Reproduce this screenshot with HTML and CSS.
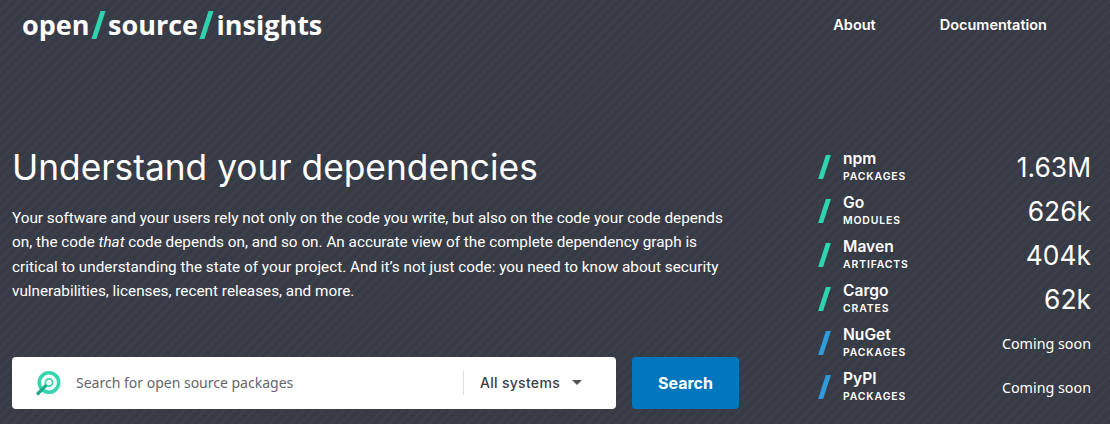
FILE: index.html
```html
<!DOCTYPE html>
<html>
  <head>
    <meta name="viewport" content="width=device-width, initial-scale=1.0" />
    <title>Open Source Insights</title>
    <link rel="stylesheet" href="styles.css">
  </head>
  <body>
    <div class="header">
      <div class="logo">open<span class="logo-slash"></span>source<span class="logo-slash"></span>insights</div>
      <div class="nav">
        <a class="nav-about">About</a>
        <a>Documentation</a>
      </div>
    </div>
    <div class="main">
      <div class="intro">
        <h1>Understand your dependencies</h1>
        <p>Your software and your users rely not only on the code you write, but also on the code your code depends on, the code <em>that</em> code depends on, and so on. An accurate view of the complete dependency graph is critical to understanding the state of your project. And it’s not just code: you need to know about security vulnerabilities, licenses, recent releases, and more.</p>
        <form class="search">
          <div class="search-box">
            <svg class="search-icon" width="28" height="28" viewBox="0 0 28 28">
              <circle cx="15" cy="13.5" r="9.7" fill="none" stroke="#35d6b0" stroke-width="3.6" />
              <circle cx="15" cy="13.5" r="3.6" fill="none" stroke="#35d6b0" stroke-width="1.8" />
              <path d="M12.3 16.2 L3 25.5" stroke="#1fa98a" stroke-width="3.2" />
            </svg>
            <span class="search-text">Search for open source packages</span>
            <div class="search-system">All systems<span class="caret"></span></div>
          </div>
          <button>Search</button>
        </form>
      </div>
      <ul class="stats">
        <li>
          <span class="slash"></span>
          <div class="system"><b>npm</b><small>PACKAGES</small></div>
          <span class="count">1.63M</span>
        </li>
        <li>
          <span class="slash"></span>
          <div class="system"><b>Go</b><small>MODULES</small></div>
          <span class="count">626k</span>
        </li>
        <li>
          <span class="slash"></span>
          <div class="system"><b>Maven</b><small>ARTIFACTS</small></div>
          <span class="count">404k</span>
        </li>
        <li>
          <span class="slash"></span>
          <div class="system"><b>Cargo</b><small>CRATES</small></div>
          <span class="count">62k</span>
        </li>
        <li class="soon">
          <span class="slash"></span>
          <div class="system"><b>NuGet</b><small>PACKAGES</small></div>
          <span class="count">Coming soon</span>
        </li>
        <li class="soon">
          <span class="slash"></span>
          <div class="system"><b>PyPI</b><small>PACKAGES</small></div>
          <span class="count">Coming soon</span>
        </li>
      </ul>
    </div>
  </body>
</html>
```

FILE: styles.css
```css
body {
  margin: 0;
  height: 424px;
  overflow: hidden;
  color: #fff;
  font-family: Inter, "Liberation Sans", sans-serif;
  background-color: #383c46;
  background-image: repeating-linear-gradient(
    135deg,
    #3c404a 0,
    #3c404a 2px,
    #373b45 2px,
    #373b45 7px
  );
}

.header {
  display: flex;
  justify-content: space-between;
  align-items: center;
  height: 48px;
  padding: 0 63px 0 22px;
}

.logo {
  display: flex;
  align-items: center;
  font-family: "Open Sans", sans-serif;
  font-weight: 700;
  font-size: 27px;
}

.logo-slash {
  width: 5px;
  height: 28px;
  margin: 2px 7px 0 6.5px;
  background: #2fd3ae;
  transform: skewX(-18deg);
}

.nav {
  display: flex;
  gap: 64px;
  font-size: 14.5px;
  font-weight: 600;
}

.main {
  display: flex;
  justify-content: space-between;
  padding: 97px 19px 0 12px;
}

.intro {
  width: 727px;
}

h1 {
  margin: 0;
  font-size: 35.3px;
  font-weight: 400;
  line-height: 46px;
}

.intro p {
  margin: 15px 0 0;
  width: 725px;
  font-family: Roboto, sans-serif;
  font-size: 15.3px;
  line-height: 24.4px;
}

.search {
  display: flex;
  gap: 16px;
  margin-top: 53px;
}

.search-box {
  display: flex;
  align-items: center;
  flex-grow: 1;
  height: 52px;
  background: #fff;
  border-radius: 4px;
  box-sizing: border-box;
  padding-left: 22px;
}

.search-icon {
  margin-right: 14px;
}

.search-text {
  flex-grow: 1;
  color: #62666d;
  font-family: "Noto Sans", sans-serif;
  font-size: 14px;
}

.search-system {
  display: flex;
  align-items: center;
  width: 153px;
  height: 24px;
  box-sizing: border-box;
  padding-left: 16px;
  border-left: 1px solid #ddd;
  color: #3a3e46;
  font-size: 14px;
  font-weight: 500;
  letter-spacing: 0.3px;
}

.caret {
  width: 0;
  height: 0;
  margin-left: 12px;
  border-left: 5px solid transparent;
  border-right: 5px solid transparent;
  border-top: 5px solid #555;
}

.search button {
  width: 107px;
  height: 52px;
  border: none;
  border-radius: 4px;
  background: #0277bd;
  color: #fff;
  font-family: Inter, sans-serif;
  font-size: 16px;
  font-weight: 700;
}

.stats {
  width: 272px;
  margin: 0;
  padding: 0;
  list-style-type: none;
}

.stats li {
  display: flex;
  align-items: center;
  height: 44px;
}

.slash {
  width: 5px;
  height: 24px;
  margin: 0 16px 0 3px;
  background: #2fd3ae;
  transform: skewX(-18deg);
}

.soon .slash {
  background: #2f9bdc;
}

.system {
  flex-grow: 1;
}

.system b {
  display: block;
  font-size: 15.6px;
  font-weight: 600;
  line-height: 18px;
}

.system small {
  display: block;
  margin-top: 2px;
  font-size: 10.4px;
  font-weight: 600;
  letter-spacing: 0.9px;
  line-height: 14px;
}

.count {
  font-size: 26.4px;
  font-weight: 400;
}

.soon .count {
  font-family: "Noto Sans", sans-serif;
  font-size: 14.3px;
}
```
